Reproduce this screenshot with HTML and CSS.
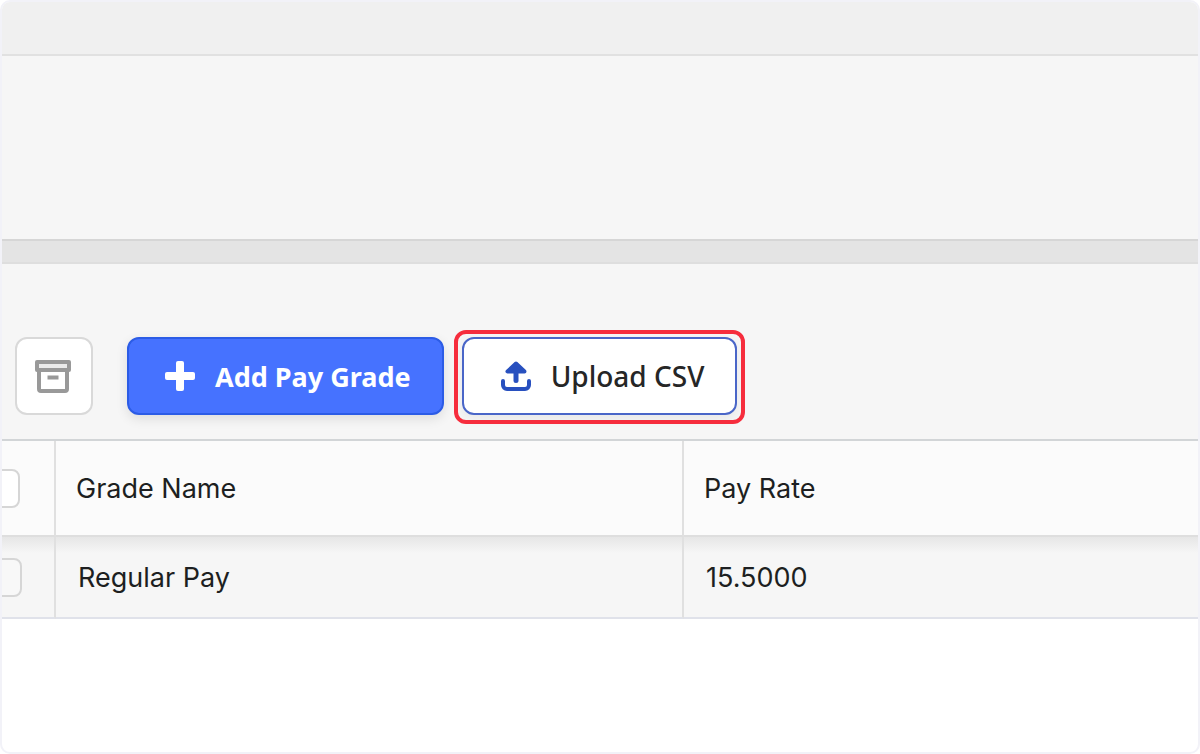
FILE: index.html
```html
<!DOCTYPE html>
<html lang="en">
<head>
    <meta charset="UTF-8">
    <meta name="viewport" content="width=device-width, initial-scale=1.0">
    <title>Pay Grades</title>
    <link rel="stylesheet" href="styles.css">
</head>
<body>
    <div class="page">
        <div class="topbar"></div>
        <div class="header"></div>
        <div class="divider"></div>

        <div class="toolbar">
            <button type="button" class="btn btn-icon" aria-label="Archive">
                <svg width="38" height="34" viewBox="0 0 38 34" fill="none" stroke="#999" stroke-width="4" stroke-linejoin="round">
                    <rect x="2" y="3" width="32" height="8" fill="#ebebeb"/>
                    <path d="M4 11v19a2 2 0 0 0 2 2h24a2 2 0 0 0 2-2V11"/>
                    <path d="M12.500 18.500h11"/>
                </svg>
            </button>
            <button type="button" class="btn btn-primary">
                <svg width="30" height="30" viewBox="0 0 30 30" fill="#fff">
                    <rect x="11" y="0" width="8" height="30" rx="2"/>
                    <rect x="0" y="11" width="30" height="8" rx="2"/>
                </svg>
                Add Pay Grade
            </button>
            <button type="button" class="btn btn-upload">
                <svg width="30" height="30" viewBox="0 0 30 30" fill="none" stroke="#2850bf" stroke-width="4" stroke-linecap="round" stroke-linejoin="round">
                    <path d="M2 20v4a4 4 0 0 0 4 4h18a4 4 0 0 0 4-4v-4"/>
                    <path d="M15 19.500V8" stroke-width="5"/>
                    <path d="M15 2.500L6.500 10.500h17z" fill="#2850bf"/>
                </svg>
                Upload CSV
            </button>
        </div>

        <table class="grades">
            <thead>
                <tr>
                    <th class="col-check"><input type="checkbox" aria-label="Select all"></th>
                    <th class="col-name">Grade Name</th>
                    <th>Pay Rate</th>
                </tr>
            </thead>
            <tbody>
                <tr>
                    <td class="col-check"><input type="checkbox" aria-label="Select Regular Pay"></td>
                    <td class="col-name">Regular Pay</td>
                    <td>15.5000</td>
                </tr>
            </tbody>
        </table>
    </div>
</body>
</html>
```

FILE: styles.css
```css
* {
    box-sizing: border-box;
}
body {
    margin: 0;
    background: white;
    font-family: Inter, sans-serif;
    color: #1d1f21;
}
.page {
    min-height: 100vh;
    border: 2px solid #f2f2f8;
    border-radius: 10px;
    overflow: hidden;
    background: white;
}
.topbar {
    height: 54px;
    background: #f0f0f0;
    border-bottom: 2px solid #e1e1e1;
}
.header {
    height: 183px;
    background: #f6f6f6;
}
.divider {
    height: 25px;
    background: #e4e4e4;
    border-top: 2px solid #d6d6d6;
    border-bottom: 2px solid #dedede;
}
.toolbar {
    display: flex;
    align-items: flex-start;
    height: 175px;
    padding: 73px 13px 0;
    background: #f6f6f6;
}
.btn {
    display: flex;
    align-items: center;
    justify-content: center;
    height: 78px;
    border: 2px solid #d9d9d9;
    border-radius: 12px;
    background: white;
    font-family: "Noto Sans", sans-serif;
    font-size: 27px;
    cursor: pointer;
}
.btn-icon {
    width: 78px;
    padding: 0;
    margin-right: 34px;
}
.btn-primary {
    gap: 20px;
    padding: 0 31px 0 36px;
    border-color: #2c5ce6;
    background: #4672ff;
    color: white;
    font-weight: 700;
    box-shadow: 0 4px 12px rgba(0,0,0,0.1);
}
.btn-upload {
    position: relative;
    gap: 20px;
    margin-left: 18px;
    padding: 0 31px 0 37px;
    border-color: #4a66c8;
    color: #262626;
    font-size: 28px;
    font-weight: 500;
    box-shadow: 0 4px 12px rgba(0,0,0,0.06);
}
/* red callout around the upload button */
.btn-upload::after {
    content: "";
    position: absolute;
    inset: -9px -10px -11px;
    border: 4px solid #f62d3d;
    border-radius: 12px;
    pointer-events: none;
}
.grades {
    width: 100%;
    border-collapse: separate;
    border-spacing: 0;
    table-layout: fixed;
    border-top: 2px solid #d2d5d7;
    font-size: 27px;
}
.grades th,
.grades td {
    padding: 0 20px;
    text-align: left;
    font-weight: 400;
    border-right: 2px solid #e0e0e0;
}
.grades th:last-child,
.grades td:last-child {
    border-right: 0;
}
.grades th {
    height: 96px;
    background: #fbfbfb;
    border-bottom: 2px solid #dedede;
}
.grades td {
    height: 82px;
    padding-left: 22px;
    background: linear-gradient(#e6e6e6, #f6f6f6 16px);
    border-bottom: 2px solid #e0e2ea;
}
.grades .col-check {
    width: 54px;
    padding: 0;
}
.grades .col-name {
    width: 628px;
}
.grades input {
    display: block;
    appearance: none;
    width: 39px;
    height: 39px;
    margin: 0 0 0 -21px;
    border: 2px solid #d6d6d6;
    border-radius: 8px;
    background: white;
}
.grades td input {
    margin-left: -19px;
    background: #f8f8f8;
}
```
